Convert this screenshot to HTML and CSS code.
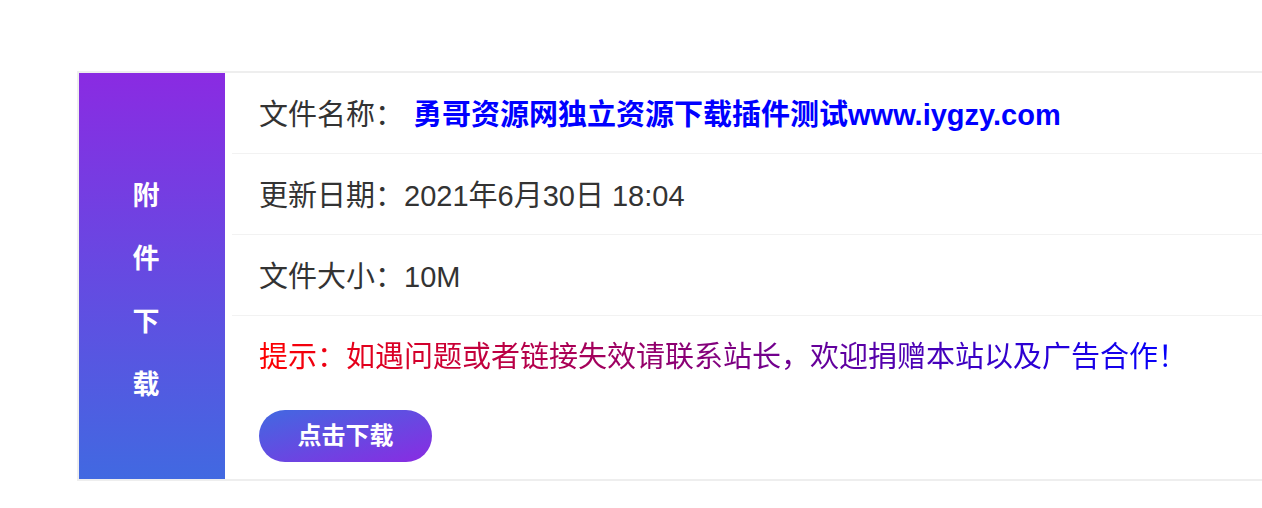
FILE: index.html
```html
<!DOCTYPE html>
<html lang="zh-CN">

<head>
  <meta charset="UTF-8">
  <meta name="viewport" content="width=device-width, initial-scale=1.0">
  <title>附件下载</title>
  <link rel="stylesheet" href="styles.css">
</head>

<body>
  <div class="download-box">
    <div class="download-side">
      <span>附</span>
      <span>件</span>
      <span>下</span>
      <span>载</span>
    </div>
    <div class="download-info">
      <div class="info-row">文件名称：<strong class="file-name">勇哥资源网独立资源下载插件测试www.iygzy.com</strong></div>
      <div class="info-row">更新日期：2021年6月30日 18:04</div>
      <div class="info-row">文件大小：10M</div>
      <div class="info-last">
        <div class="tip"><span>提示：如遇问题或者链接失效请联系站长，欢迎捐赠本站以及广告合作！</span></div>
        <a class="download-btn" href="#">点击下载</a>
      </div>
    </div>
  </div>
</body>

</html>
```

FILE: styles.css
```css
body {
  margin: 0;
  padding: 71px 0 0 77px;
  font-family: "Liberation Sans", "Noto Sans CJK SC", sans-serif;
  background: #fff;
  overflow: hidden;
}

.download-box {
  display: flex;
  width: 1240px;
  border: 2px solid #eee;
  border-right: none;
  background: #fff;
}

.download-side {
  width: 146px;
  margin-right: 2px;
  background: linear-gradient(to bottom, #8a2be2, #4169e1);
  color: #fff;
  font-size: 27px;
  font-weight: bold;
  display: flex;
  flex-direction: column;
  justify-content: center;
  align-items: center;
  padding: 29px 12px 0 0;
  box-sizing: border-box;
}

.download-side span {
  line-height: 63px;
}

.download-info {
  flex: 1;
  padding-left: 5px;
}

.info-row {
  height: 80px;
  line-height: 84px;
  padding-left: 27px;
  border-bottom: 1px solid #f2f2f2;
  font-size: 29px;
  color: #333;
  white-space: nowrap;
}

.file-name {
  color: #0000ff;
  margin-left: 9px;
}

.info-last {
  padding-left: 27px;
}

.tip {
  height: 80px;
  line-height: 82px;
  font-size: 29px;
}

.tip span {
  background: linear-gradient(to right, #ff0000, #0000ff);
  -webkit-background-clip: text;
  background-clip: text;
  color: transparent;
}

.download-btn {
  display: inline-block;
  margin: 14px 0 17px;
  width: 173px;
  height: 52px;
  line-height: 52px;
  border-radius: 26px;
  text-align: center;
  background: linear-gradient(to bottom right, #4169e1, #8a2be2);
  color: #fff;
  font-size: 24px;
  font-weight: bold;
  text-decoration: none;
}
```
